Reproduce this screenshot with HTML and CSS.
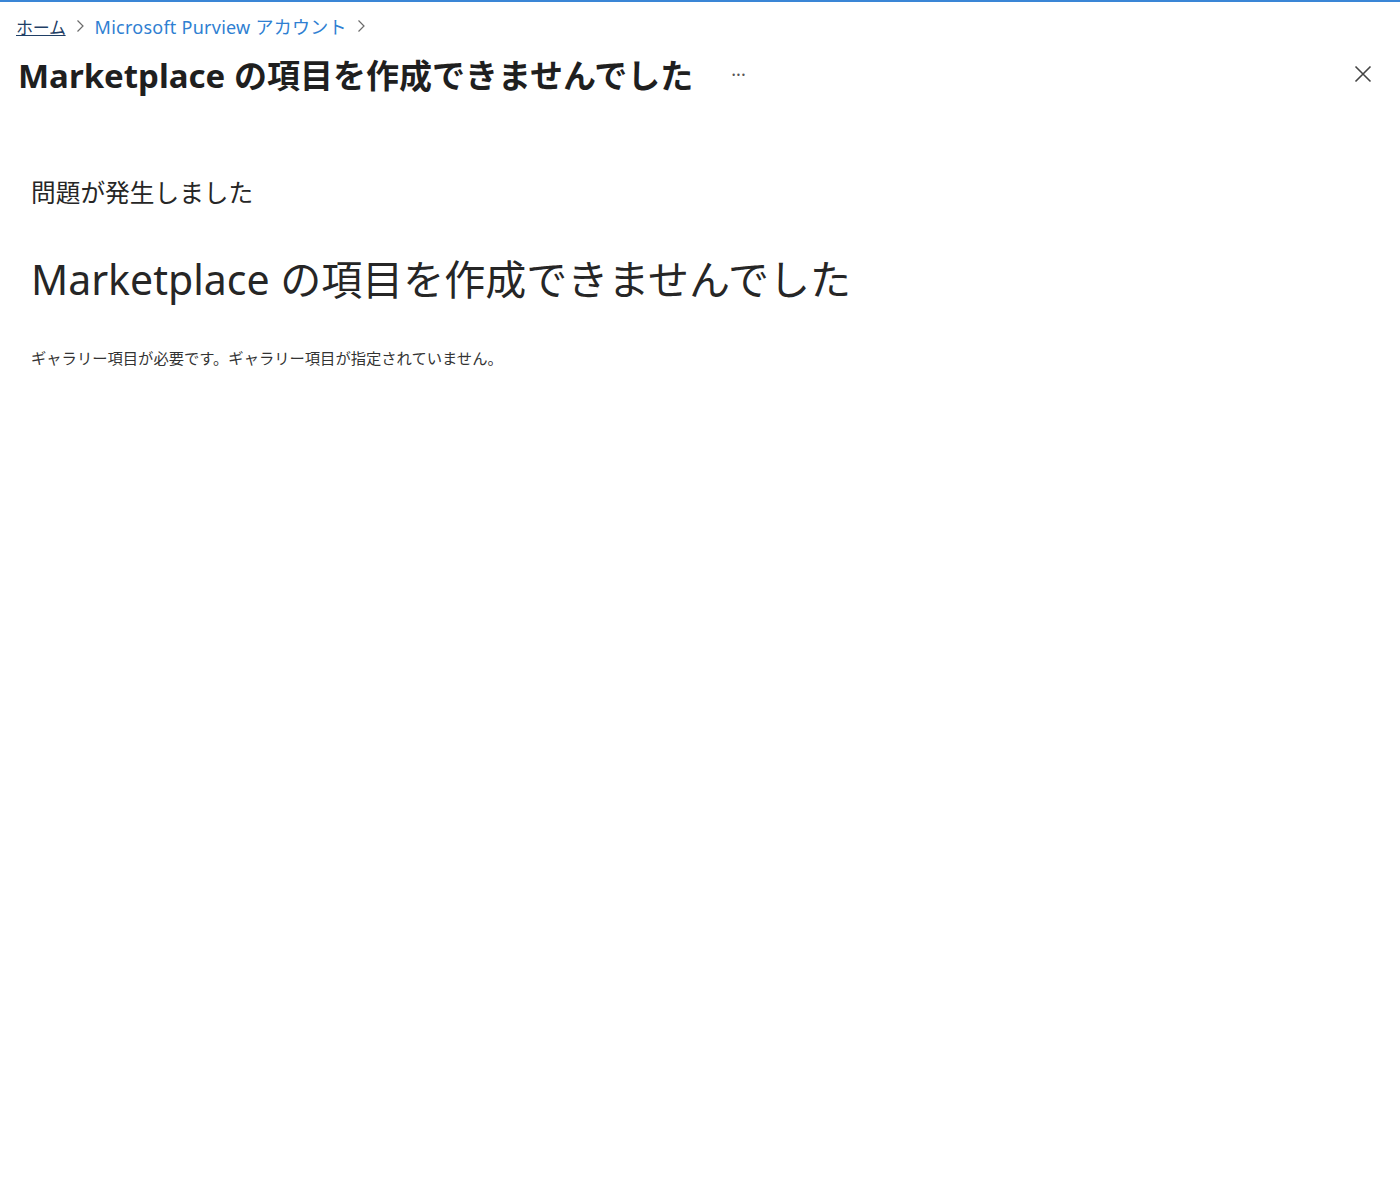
FILE: index.html
```html
<!DOCTYPE html>
<html lang="ja">
<head>
<meta charset="utf-8">
<title>Marketplace の項目を作成できませんでした</title>
<link rel="stylesheet" href="styles.css">
</head>
<body>
<div class="topline"></div>
<nav class="breadcrumb">
  <a class="crumb home" href="#">ホーム</a>
  <span class="chev"><svg width="10" height="14" viewBox="0 0 10 14"><path d="M2.5 1.5 L8 7 L2.5 12.5" fill="none" stroke="#6b6b6b" stroke-width="1.2"/></svg></span>
  <a class="crumb" href="#">Microsoft Purview アカウント</a>
  <span class="chev"><svg width="10" height="14" viewBox="0 0 10 14"><path d="M2.5 1.5 L8 7 L2.5 12.5" fill="none" stroke="#6b6b6b" stroke-width="1.2"/></svg></span>
</nav>
<header class="titlebar">
  <h1 class="title">Marketplace の項目を作成できませんでした</h1>
  <span class="more">···</span>
  <button class="close" aria-label="閉じる"><svg width="18" height="18" viewBox="0 0 18 18"><path d="M1.5 1.5 L16.5 16.5 M16.5 1.5 L1.5 16.5" stroke="#444" stroke-width="1.6" fill="none"/></svg></button>
</header>
<main class="content">
  <h2 class="sub">問題が発生しました</h2>
  <h3 class="big">Marketplace の項目を作成できませんでした</h3>
  <p class="msg">ギャラリー項目が必要です。ギャラリー項目が指定されていません。</p>
</main>
</body>
</html>
```
FILE: styles.css
```css
html, body {
  margin: 0;
  padding: 0;
  background: #fff;
}
body {
  font-family: "Segoe UI", "Noto Sans", "Noto Sans CJK JP", sans-serif;
  color: #262626;
}
.topline {
  height: 2px;
  background: #3a86d6;
}
.breadcrumb {
  display: flex;
  align-items: center;
  padding: 11px 0 0 16px;
  height: 26px;
  font-size: 18px;
}
.crumb {
  color: #2f7fd2;
  text-decoration: none;
  letter-spacing: 0.25px;
}
.crumb.home {
  color: #1f3f66;
  text-decoration: underline;
  font-size: 17px;
  letter-spacing: -0.3px;
}
.chev {
  display: inline-flex;
  margin: 0 10px 0 9px;
}
.titlebar {
  display: flex;
  align-items: center;
  margin-top: 11px;
  padding: 0 0 0 18px;
  height: 48px;
}
.title {
  margin: 0;
  font-size: 33px;
  font-weight: 700;
  color: #1f1f1f;
}
.more {
  margin-left: 38px;
  font-size: 18px;
  color: #555;
}
.close {
  margin-left: auto;
  margin-right: 28px;
  background: none;
  border: 0;
  padding: 0;
  display: flex;
}
.content {
  padding: 75px 0 0 31px;
}
.sub {
  margin: 0;
  font-size: 24.7px;
  font-weight: 400;
  color: #262626;
}
.big {
  margin: 38px 0 0 0;
  font-size: 41px;
  font-weight: 400;
  color: #262626;
}
.msg {
  margin: 39px 0 0 0;
  font-size: 15.3px;
  color: #333;
}
```
